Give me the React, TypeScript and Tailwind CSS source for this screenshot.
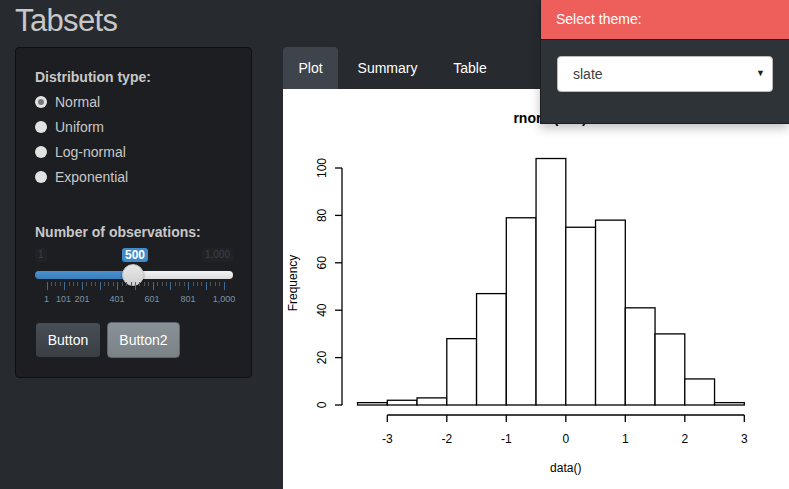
import type { ReactNode } from "react";

const counts = [1, 2, 3, 28, 47, 79, 104, 75, 78, 41, 30, 11, 1];
const xs = (v: number) => 565.8 + 59.5 * v;
const ys = (c: number) => 405 - 2.37 * c;

function Radio({ label, checked }: { label: string; checked?: boolean }) {
	return (
		<div className="flex h-5 items-center gap-[8px]">
			<span className="flex h-[12px] w-[12px] items-center justify-center rounded-full bg-[#e2e2e2]">
				{checked && <span className="h-[6px] w-[6px] rounded-full bg-[#7a7a7a]" />}
			</span>
			<span>{label}</span>
		</div>
	);
}

function Slider() {
	const ticks: ReactNode[] = [];
	const start = 11.5;
	const step = 17.7;
	for (let i = 0; i <= 10; i++) {
		const x = start + i * step;
		ticks.push(
			<span
				key={`M${i}`}
				className="absolute top-[36px] h-[8px] w-px bg-[#3d6d94]"
				style={{ left: x }}
			/>,
		);
		if (i < 10) {
			for (let j = 1; j < 4; j++) {
				ticks.push(
					<span
						key={`m${i}-${j}`}
						className="absolute top-[36px] h-[4px] w-px bg-[#4d545b]"
						style={{ left: x + (step * j) / 4 }}
					/>,
				);
			}
		}
	}
	const labels: [string, number][] = [
		["1", 11.5],
		["101", 28.5],
		["201", 47],
		["401", 82],
		["601", 117],
		["801", 153],
		["1,000", 189],
	];
	return (
		<div className="relative mt-[4px] h-[62px] w-[198px]">
			<span className="absolute left-0 top-[2px] rounded-[3px] bg-[#202226] px-[3px] text-[10px] leading-[14px] text-[#3b4046]">
				1
			</span>
			<span className="absolute right-0 top-[2px] rounded-[3px] bg-[#202226] px-[3px] text-[10px] leading-[14px] text-[#3b4046]">
				1,000
			</span>
			<span className="absolute left-[87px] top-[2px] rounded-[3px] bg-[#428bca] px-[3px] text-[12px] font-bold leading-[14px] text-white">
				500
			</span>
			<div className="absolute left-0 top-[25px] flex h-[8px] w-[198px] overflow-hidden rounded-full">
				<div className="h-full w-[98px] bg-gradient-to-b from-[#4b92cf] to-[#3a7fbd]" />
				<div className="h-full flex-1 bg-gradient-to-b from-[#f4f4f4] to-[#dcdcdc]" />
			</div>
			<span className="absolute left-[87px] top-[18px] h-[22px] w-[22px] rounded-full border border-[#c4c4c4] bg-gradient-to-b from-[#e8e8e8] to-[#d0d0d0] shadow-[0_1px_2px_rgba(0,0,0,0.4)]" />
			{ticks}
			{labels.map(([t, x]) => (
				<span
					key={t}
					className="absolute top-[46px] -translate-x-1/2 text-[9px] leading-[14px] text-[#7d93a6]"
					style={{ left: x }}
				>
					{t}
				</span>
			))}
		</div>
	);
}

function Plot() {
	return (
		<svg
			viewBox="283 89 506 400"
			width={506}
			height={400}
			className="block font-['Liberation_Sans',Arial,sans-serif]"
		>
			<text x={550} y={123} textAnchor="middle" fontSize={14} fontWeight={700} fill="#000">
				rnorm(500)
			</text>
			{counts.map((c, i) => {
				const v0 = -3.5 + i * 0.5;
				return (
					<rect
						key={i}
						x={xs(v0)}
						y={ys(c)}
						width={59.5 * 0.5}
						height={2.37 * c}
						fill="#fff"
						stroke="#000"
						strokeWidth={1.3}
					/>
				);
			})}
			<g stroke="#000" strokeWidth={1.3}>
				<line x1={342} y1={ys(0)} x2={342} y2={ys(100)} />
				{[0, 20, 40, 60, 80, 100].map((c) => (
					<line key={c} x1={335} y1={ys(c)} x2={342} y2={ys(c)} />
				))}
				<line x1={xs(-3)} y1={415} x2={xs(3)} y2={415} />
				{[-3, -2, -1, 0, 1, 2, 3].map((v) => (
					<line key={v} x1={xs(v)} y1={415} x2={xs(v)} y2={422} />
				))}
			</g>
			<g fontSize={12} fill="#000">
				{[0, 20, 40, 60, 80, 100].map((c) => (
					<text
						key={c}
						x={0}
						y={0}
						textAnchor="middle"
						transform={`translate(326 ${ys(c)}) rotate(-90)`}
					>
						{c}
					</text>
				))}
				<text textAnchor="middle" transform="translate(297 283) rotate(-90)">
					Frequency
				</text>
				{[-3, -2, -1, 0, 1, 2, 3].map((v) => (
					<text key={v} x={xs(v)} y={443} textAnchor="middle">
						{v}
					</text>
				))}
				<text x={565.8} y={472} textAnchor="middle">
					data()
				</text>
			</g>
		</svg>
	);
}

export default function App() {
	return (
		<div className="relative h-[489px] w-[789px] overflow-hidden bg-[#272b30] font-['Liberation_Sans',Arial,sans-serif] text-[14px] text-[#c8c8c8]">
			<h1 className="h-[47px] pl-[15px] pt-[3px] text-[31px] leading-[36px] tracking-[-0.02em] text-[#c8c8c8]">
				Tabsets
			</h1>
			<div className="flex items-start">
				<aside className="ml-[15px] flex w-[237px] flex-col rounded-[4px] border border-[#0f1012] bg-[#1c1e22] p-[19px]">
					<div className="font-bold leading-5">Distribution type:</div>
					<div className="mt-[5px] flex flex-col gap-[5px] leading-5">
						<Radio label="Normal" checked />
						<Radio label="Uniform" />
						<Radio label="Log-normal" />
						<Radio label="Exponential" />
					</div>
					<div className="mt-[35px] font-bold leading-5">Number of observations:</div>
					<Slider />
					<div className="mt-[14px] flex gap-[6px]">
						<button className="h-[36px] w-[66px] rounded-[4px] border border-[#1c1e22] bg-gradient-to-b from-[#484e55] to-[#3a3f44] text-[14px] text-white">
							Button
						</button>
						<button className="h-[36px] w-[73px] rounded-[4px] border border-[#5e6469] bg-gradient-to-b from-[#8a9196] to-[#7a8288] text-[14px] text-white">
							Button2
						</button>
					</div>
				</aside>
				<main className="ml-[31px] flex flex-1 flex-col">
					<nav className="flex h-[42px] gap-[2px] text-white">
						<div className="flex w-[55px] items-center justify-center rounded-t-[4px] bg-[#3e444c]">
							Plot
						</div>
						<div className="flex w-[95px] items-center justify-center">Summary</div>
						<div className="flex w-[66px] items-center justify-center">Table</div>
					</nav>
					<div className="h-[400px] bg-white">
						<Plot />
					</div>
				</main>
			</div>
			<div className="absolute right-0 top-0 w-[249px] border-l border-b border-[#1c1e22] bg-[#2e3338] shadow-[0_4px_10px_rgba(0,0,0,0.25)]">
				<div className="flex h-[40px] items-center border-b border-[#1c1e22] bg-[#ee5f5b] pl-[15px] text-white">
					Select theme:
				</div>
				<div className="px-[16px] pb-[31px] pt-[16px]">
					<div className="flex h-[36px] items-center justify-between rounded-[4px] border border-[#bbb] bg-white pl-[15px] pr-[7px] text-[#3a3f44]">
						<span>slate</span>
						<span className="text-[9px] text-[#222]">▼</span>
					</div>
				</div>
			</div>
		</div>
	);
}
